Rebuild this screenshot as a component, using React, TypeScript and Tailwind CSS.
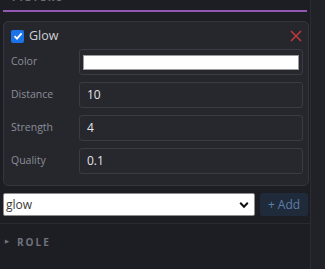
import React from "react";

const Field = ({ label, value }: { label: string; value: string }) => (
  <div className="flex items-center h-[26px]">
    <span className="w-[74px] pl-[6px] text-[10.5px] text-[#8b8e98]">{label}</span>
    <div className="flex-1 h-[26px] border border-[#3b3c43] rounded-[3px] bg-[#27282e] flex items-center px-[7px] text-[12px] text-[#e4e4e8]">
      {value}
    </div>
  </div>
);

export default function App() {
  return (
    <div
      className="w-[325px] h-[269px] bg-[#1d1e23] flex overflow-hidden"
      style={{ fontFamily: '"Open Sans", "Noto Sans", sans-serif' }}
    >
      <div className="w-[311px] border-r border-[#2c2d33] flex flex-col">
        <div className="h-[10px] relative">
          <span className="absolute left-[12px] -top-[10px] text-[10px] font-bold tracking-[2px] text-[#6d6f78]">
            FILTERS
          </span>
        </div>
        <div className="mx-[3px] h-[2px] bg-[#9257b0]" />
        <div className="mt-[9px] ml-[3px] w-[306px] border border-[#35363d] rounded-[5px] bg-[#26272d] pl-[1px] pr-[5px] pt-[7px] pb-[11px]">
          <div className="flex items-center h-[14px] pl-[6px] pr-[1px]">
            <span className="w-[13px] h-[13px] rounded-[2px] bg-[#1a73e8] flex items-center justify-center">
              <svg width="10" height="10" viewBox="0 0 10 10">
                <path d="M1.5 5.2 L4 7.6 L8.6 2.4" stroke="#fff" strokeWidth="1.8" fill="none" />
              </svg>
            </span>
            <span className="ml-[5px] text-[12.5px] font-medium text-[#cfd0d4]">Glow</span>
            <span className="ml-auto">
              <svg width="12" height="12" viewBox="0 0 12 12">
                <path d="M1 1 L11 11 M11 1 L1 11" stroke="#c2393d" strokeWidth="1.5" />
              </svg>
            </span>
          </div>
          <div className="mt-[6px] flex flex-col gap-[7px]">
            <div className="flex items-center h-[26px]">
              <span className="w-[74px] pl-[6px] text-[10.5px] text-[#8b8e98]">Color</span>
              <div className="flex-1 h-[26px] border border-[#3b3c43] rounded-[3px] bg-[#27282e] flex items-center px-[3px]">
                <div className="w-full h-[15px] bg-white border border-[#9a9a9a]" />
              </div>
            </div>
            <Field label="Distance" value="10" />
            <Field label="Strength" value="4" />
            <Field label="Quality" value="0.1" />
          </div>
        </div>
        <div className="mt-[7px] ml-[3px] flex gap-[5px] items-center">
          <div className="w-[252px] h-[23px] bg-white border border-[#8d8d8d] rounded-[2px] flex items-center px-[2px] text-[12px] text-[#3a3a3a]">
            glow
            <svg className="ml-auto mr-[3px]" width="10" height="8" viewBox="0 0 10 8">
              <path d="M1.2 1.8 L5 5.8 L8.8 1.8" stroke="#111" strokeWidth="2" fill="none" />
            </svg>
          </div>
          <div className="w-[48px] h-[23px] rounded-[3px] bg-[#1f2a3a] flex items-center justify-center text-[12px] text-[#5d7fa8]">
            + Add
          </div>
        </div>
        <div className="mt-[7px] h-px bg-[#2a2b31]" />
        <div className="mt-[11px] h-[14px] flex items-center pl-[5px] text-[10px] font-bold tracking-[2px] text-[#70727c]">
          <span className="text-[5px] mr-[6px]">▶</span>
          ROLE
        </div>
      </div>
      <div className="flex-1 bg-[#212228]" />
    </div>
  );
}
